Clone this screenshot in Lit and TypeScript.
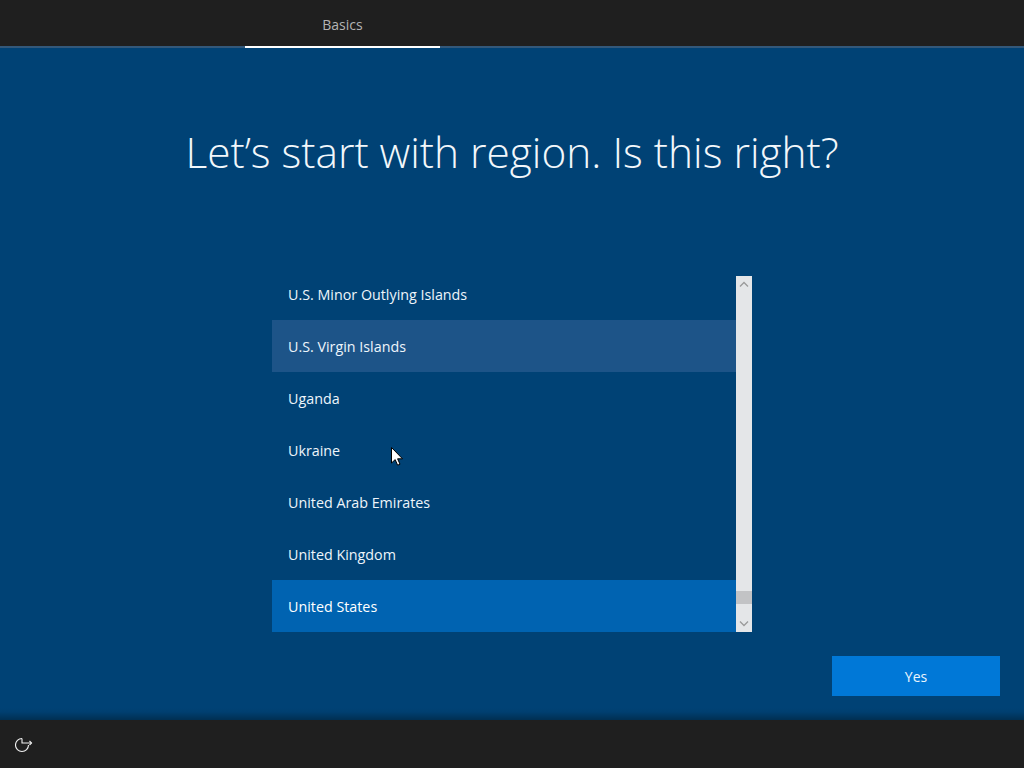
import { LitElement, html, css, svg } from "lit";
import { customElement } from "lit/decorators.js";

const FONT = css`"Open Sans", "Noto Sans", "Liberation Sans", sans-serif`;

@customElement("app-root")
export class AppRoot extends LitElement {
  static styles = css`
    :host {
      display: block;
      width: 1024px;
      height: 768px;
      overflow: hidden;
      position: relative;
      font-family: ${FONT};
      color: #fff;
    }
    .page {
      width: 1024px;
      height: 768px;
      display: flex;
      flex-direction: column;
      background: #004275;
    }
    .top {
      height: 48px;
      flex: none;
      background: #1f1f1f;
      box-sizing: border-box;
      border-bottom: 2px solid #33587a;
      padding-left: 245px;
      display: flex;
    }
    .tab {
      width: 195px;
      height: 48px;
      box-sizing: border-box;
      border-bottom: 2px solid #fff;
      text-align: center;
      font-size: 14px;
      line-height: 50px;
      color: #b4b4b4;
    }
    .main {
      flex: 1;
      min-height: 0;
      display: flex;
      flex-direction: column;
      align-items: center;
      background: linear-gradient(#004275 0, #004275 660px, #003f70 664px, #002f52 672px);
    }
    h1 {
      margin: 73px 0 0;
      height: 155px;
      font-size: 42.4px;
      line-height: 62px;
      font-weight: 300;
      color: #f2f7fb;
      white-space: nowrap;
    }
    .panel {
      width: 480px;
      height: 356px;
      display: flex;
      flex: none;
    }
    .list {
      width: 464px;
      height: 356px;
      overflow: hidden;
    }
    .rows {
      margin-top: -8px;
    }
    .row {
      height: 52px;
      box-sizing: border-box;
      padding-left: 16px;
      font-size: 14.3px;
      line-height: 54px;
      color: #eef5fb;
    }
    .hover {
      background: #1d5488;
    }
    .selected {
      background: #0063b1;
      color: #fff;
    }
    .bar {
      width: 16px;
      height: 356px;
      background: #e4e6e8;
      display: flex;
      flex-direction: column;
      justify-content: space-between;
      align-items: center;
    }
    .bar svg {
      display: block;
      width: 16px;
      height: 16px;
      flex: none;
    }
    .track {
      flex: 1;
      width: 16px;
      display: flex;
      flex-direction: column;
      justify-content: flex-end;
      padding-bottom: 12px;
    }
    .thumb {
      height: 13px;
      background: #c2c3c5;
    }
    .actions {
      align-self: stretch;
      display: flex;
      justify-content: flex-end;
      padding: 24px 24px 0 0;
    }
    .yes {
      width: 168px;
      height: 40px;
      text-align: center;
      line-height: 42px;
      font-size: 14px;
      background: #0078d7;
      color: #eaf5fd;
    }
    .bottom {
      height: 48px;
      flex: none;
      background: #1f1f1f;
      display: flex;
      align-items: center;
      padding-left: 15px;
    }
    .bottom svg {
      display: block;
    }
    .cursor {
      position: absolute;
      left: 391px;
      top: 447px;
      width: 12px;
      height: 19px;
    }
  `;

  render() {
    const rows = [
      "U.S. Minor Outlying Islands",
      "U.S. Virgin Islands",
      "Uganda",
      "Ukraine",
      "United Arab Emirates",
      "United Kingdom",
      "United States",
    ];
    return html`
      <div class="page">
        <div class="top"><div class="tab">Basics</div></div>
        <div class="main">
          <h1>Let’s start with region. Is this right?</h1>
          <div class="panel">
            <div class="list">
              <div class="rows">
                ${rows.map(
                  (r, i) => html`<div class="row ${i === 1 ? "hover" : ""} ${i === 6 ? "selected" : ""}">${r}</div>`
                )}
              </div>
            </div>
            <div class="bar">
              <svg viewBox="0 0 16 16"><path d="M4 10.5 8 6.5 12 10.5" fill="none" stroke="#9a9a9a" stroke-width="1.3"/></svg>
              <div class="track"><div class="thumb"></div></div>
              <svg viewBox="0 0 16 16"><path d="M4 5.5 8 9.5 12 5.5" fill="none" stroke="#9a9a9a" stroke-width="1.3"/></svg>
            </div>
          </div>
          <div class="actions"><div class="yes">Yes</div></div>
        </div>
        <div class="bottom">
          <svg width="18" height="18" viewBox="0 0 18 18" fill="none" stroke="#f0f0f0" stroke-width="1.1">
            ${svg`<path d="M7 3.5A6.5 6.5 0 1 0 13.5 10"/><path d="M7 3.5V8H16.5"/><path d="M14.5 6 16.5 8 14.5 10"/>`}
          </svg>
        </div>
      </div>
      <svg class="cursor" viewBox="0 0 12 19">
        <path d="M.5.5V16L4.2 12.6 6.6 18.2 9 17.2 6.6 11.8H11.5Z" fill="#fff" stroke="#000" stroke-width="1"/>
      </svg>
    `;
  }
}
